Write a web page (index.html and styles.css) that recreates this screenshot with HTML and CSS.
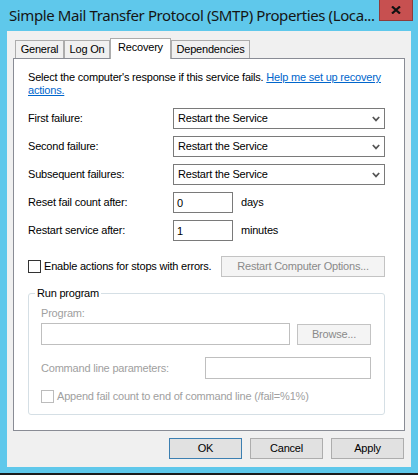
FILE: index.html
```html
<!DOCTYPE html>
<html lang="en">
<head>
  <meta charset="UTF-8" />
  <title>SMTP Properties</title>
  <link rel="stylesheet" href="styles.css">
</head>
<body>

  <div class="window">
    <div class="titlebar">
      <span class="title">Simple Mail Transfer Protocol (SMTP) Properties (Loca...</span>
      <button class="close" aria-label="Close">
        <svg width="10" height="8" viewBox="0 0 10 8">
          <path d="M1 0.5 L9 7.5 M9 0.5 L1 7.5" stroke="#111" stroke-width="2.2" fill="none" />
        </svg>
      </button>
    </div>

    <div class="client">
      <div class="tabs">
        <div class="tab tab-general">General</div>
        <div class="tab tab-logon">Log On</div>
        <div class="tab tab-recovery active">Recovery</div>
        <div class="tab tab-deps">Dependencies</div>
      </div>

      <div class="page">
        <p class="intro">Select the computer's response if this service fails. <a href="#">Help me set up recovery actions.</a></p>

        <div class="fields">
          <div class="row">
            <label>First failure:</label>
            <div class="select">Restart the Service
              <svg width="8" height="6" viewBox="0 0 8 6"><path d="M0.8 1 L4 4.4 L7.2 1" stroke="#555" stroke-width="1.7" fill="none" /></svg>
            </div>
          </div>
          <div class="row">
            <label>Second failure:</label>
            <div class="select">Restart the Service
              <svg width="8" height="6" viewBox="0 0 8 6"><path d="M0.8 1 L4 4.4 L7.2 1" stroke="#555" stroke-width="1.7" fill="none" /></svg>
            </div>
          </div>
          <div class="row">
            <label>Subsequent failures:</label>
            <div class="select">Restart the Service
              <svg width="8" height="6" viewBox="0 0 8 6"><path d="M0.8 1 L4 4.4 L7.2 1" stroke="#555" stroke-width="1.7" fill="none" /></svg>
            </div>
          </div>
          <div class="row">
            <label>Reset fail count after:</label>
            <input class="num" type="text" value="0" />
            <span class="unit">days</span>
          </div>
          <div class="row">
            <label>Restart service after:</label>
            <input class="num" type="text" value="1" />
            <span class="unit">minutes</span>
          </div>
        </div>

        <div class="check-row">
          <label class="check"><span class="box"></span>Enable actions for stops with errors.</label>
          <button class="btn btn-off" disabled>Restart Computer Options...</button>
        </div>

        <fieldset class="group">
          <legend>Run program</legend>
          <div class="off-label">Program:</div>
          <div class="prog-row">
            <input class="field-off prog-input" type="text" disabled />
            <button class="btn btn-off browse" disabled>Browse...</button>
          </div>
          <div class="cmd-row">
            <span class="off-label cmd-label">Command line parameters:</span>
            <input class="field-off cmd-input" type="text" disabled />
          </div>
          <label class="check append"><span class="box box-off"></span>Append fail count to end of command line (/fail=%1%)</label>
        </fieldset>
      </div>

      <div class="actions">
        <button class="btn btn-default">OK</button>
        <button class="btn">Cancel</button>
        <button class="btn">Apply</button>
      </div>
    </div>
  </div>

</body>
</html>
```

FILE: styles.css
```css
body {
  margin: 0;
  background: #1c1c1c;
  font-family: 'Liberation Sans', Arial, sans-serif;
  font-size: 11px;
  line-height: 13px;
  letter-spacing: -0.2px;
  color: #000;
}

.window {
  width: 418px;
  height: 473px;
  background: #5fc8eb;
  display: flex;
  flex-direction: column;
}

.titlebar {
  height: 31px;
  display: flex;
  align-items: flex-start;
}

.title {
  margin: 5px 0 0 9px;
  font-family: 'Noto Sans', sans-serif;
  font-size: 15px;
  line-height: 20px;
  letter-spacing: -0.4px;
  color: #151515;
  white-space: nowrap;
}

.close {
  margin-left: auto;
  margin-right: 5px;
  width: 34px;
  height: 21px;
  padding: 0;
  background: #c75050;
  border: 1px solid #8e3b3b;
  border-top: none;
  display: flex;
  align-items: center;
  justify-content: center;
}

.client {
  flex: 1;
  margin: 0 7px 6px;
  background: #f0f0f0;
  padding: 7px 6px 8px;
  display: flex;
  flex-direction: column;
}

/* tabs */
.tabs {
  display: flex;
  align-items: flex-end;
  height: 20px;
  padding-left: 2px;
}

.tab {
  height: 18px;
  box-sizing: border-box;
  border: 1px solid #acacac;
  border-bottom: none;
  background: #f0f0f0;
  padding-top: 2px;
  text-align: center;
}

.tab-general { width: 49px; }
.tab-logon { width: 46px; }
.tab-recovery { width: 61px; }
.tab-deps { width: 79px; }

.tab.active {
  height: 21px;
  margin-bottom: -1px;
  background: #fff;
  position: relative;
  z-index: 1;
}

.page {
  background: #fff;
  border: 1px solid #898c95;
  padding: 12px 19px 15px 14px;
}

.intro {
  margin: 0 -4px 11px 0;
}

.intro a {
  color: #0066cc;
}

/* failure rows */
.fields {
  display: flex;
  flex-direction: column;
  gap: 7px;
}

.row {
  display: flex;
  align-items: center;
  height: 21px;
}

.row label {
  width: 145px;
}

.select {
  width: 212px;
  height: 21px;
  box-sizing: border-box;
  border: 1px solid #7a7a7a;
  padding: 0 4px 0 4px;
  display: flex;
  align-items: center;
  justify-content: space-between;
}

.num {
  width: 60px;
  height: 21px;
  box-sizing: border-box;
  border: 1px solid #7a7a7a;
  padding: 0 3px;
  font: inherit;
  letter-spacing: inherit;
  color: #000;
  outline: none;
}

.unit {
  margin-left: 8px;
}

.check-row {
  display: flex;
  align-items: center;
  height: 21px;
  margin-top: 15px;
}

.check {
  display: flex;
  align-items: center;
  gap: 3px;
}

.check-row .check {
  width: 193px;
}

.box {
  width: 13px;
  height: 13px;
  box-sizing: border-box;
  border: 1px solid #333;
  background: #fff;
}

.box-off {
  border-color: #bcbcbc;
}

/* buttons */
.btn {
  width: 73px;
  height: 21px;
  box-sizing: border-box;
  padding: 0;
  font: inherit;
  letter-spacing: inherit;
  color: #000;
  background: #e1e1e1;
  border: 1px solid #adadad;
}

.btn-default {
  border-color: #3c7fb1;
}

.btn-off {
  background: #f4f4f4;
  border-color: #c3c3c3;
  color: #8a8a8a;
}

.check-row .btn-off {
  width: 164px;
}

/* run program group */
.group {
  margin: 9px 0 0;
  padding: 0 13px 11px 12px;
  border: 1px solid #d5dfe5;
  border-radius: 3px;
  min-width: 0;
}

.group legend {
  margin-left: -6px;
  padding: 0 2px;
  line-height: 14px;
}

.off-label {
  color: #a0a0a0;
}

.group > .off-label {
  margin-top: 7px;
}

.field-off {
  height: 22px;
  box-sizing: border-box;
  border: 1px solid #bfbfbf;
  background: #fff;
  padding: 0;
}

.prog-row {
  display: flex;
  align-items: center;
  gap: 7px;
  margin-top: 3px;
}

.prog-input {
  width: 249px;
}

.browse {
  width: 74px;
}

.cmd-row {
  display: flex;
  align-items: center;
  margin-top: 12px;
}

.cmd-label {
  width: 165px;
}

.cmd-input {
  width: 166px;
}

.append {
  margin-top: 11px;
  color: #a0a0a0;
}

.actions {
  display: flex;
  justify-content: flex-end;
  gap: 8px;
  margin-top: 7px;
  padding-right: 1px;
}
```
